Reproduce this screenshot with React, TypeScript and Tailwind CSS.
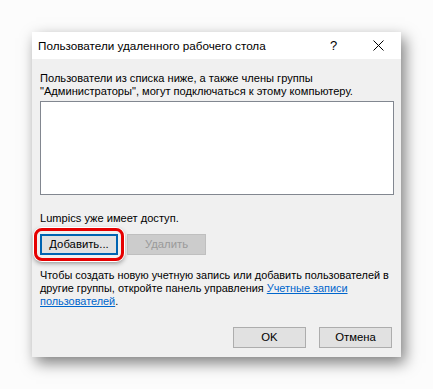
import React from 'react';

const font = { fontFamily: '"Segoe UI", "Liberation Sans", Arial, sans-serif' };

export default function App() {
  return (
    <div className="w-[433px] h-[389px] bg-[#fcfcfc] pt-[32px] pl-[32px]" style={font}>
      <div className="w-[369px] h-[325px] bg-[#f0f0f0] flex flex-col shadow-[4px_6px_14px_rgba(0,0,0,0.5)] text-[11.1px] text-black whitespace-nowrap">
        {/* title bar */}
        <div className="h-[27px] bg-white flex items-center pl-[6px]">
          <span className="flex-1 text-[11.7px] leading-none">Пользователи удаленного рабочего стола</span>
          <span className="w-[46px] text-center text-[13px] pl-[3px]">?</span>
          <span className="w-[46px] flex justify-center">
            <svg width="11" height="11" viewBox="0 0 11 11">
              <path d="M0.5 0.5L10.5 10.5M10.5 0.5L0.5 10.5" stroke="#000" strokeWidth="1" />
            </svg>
          </span>
        </div>

        <div className="flex flex-col px-[8px] pt-[13px]">
          <p className="leading-[13px]">
            Пользователи из списка ниже, а также члены группы
            <br />
            "Администраторы", могут подключаться к этому компьютеру.
          </p>
          <div className="mt-[3px] w-[354px] h-[94px] bg-white border border-[#828790]" />

          <p className="mt-[17px] leading-[13px]">Lumpics уже имеет доступ.</p>

          <div className="mt-[3px] flex items-center">
            <div className="-ml-[6px] p-[3px] rounded-[8px] border-[3px] border-[#e60000] ring-1 ring-white shadow-[0_2px_5px_rgba(0,0,0,0.45)]">
              <button className="w-[78px] h-[21px] bg-[#e1e1e1] border-2 border-[#0063b1] flex items-center justify-center text-[11.3px]">
                Добавить...
              </button>
            </div>
            <button className="ml-[3px] w-[79px] h-[21px] bg-[#cccccc] border border-[#bfbfbf] flex items-center justify-center text-[11.3px] text-[#9a9a9a]">
              Удалить
            </button>
          </div>

          <p className="mt-[8px] leading-[13px] text-[10.9px]">
            Чтобы создать новую учетную запись или добавить пользователей в
            <br />
            другие группы, откройте панель управления{' '}
            <a className="text-[#0066cc] underline">Учетные записи</a>
            <br />
            <a className="text-[#0066cc] underline">пользователей</a>.
          </p>

          <div className="mt-[19px] flex justify-end gap-[13px] pr-[1px]">
            <button className="w-[73px] h-[21px] bg-[#e1e1e1] border border-[#adadad] text-[11.3px]">OK</button>
            <button className="w-[73px] h-[21px] bg-[#e1e1e1] border border-[#adadad] text-[11.3px]">Отмена</button>
          </div>
        </div>
      </div>
    </div>
  );
}
